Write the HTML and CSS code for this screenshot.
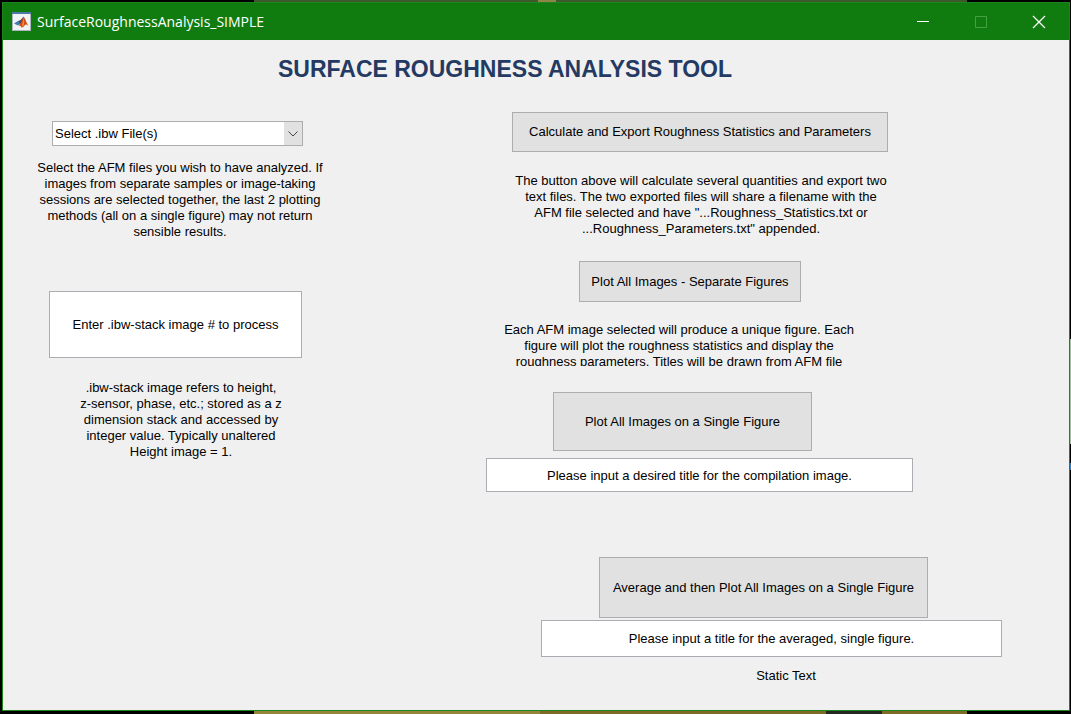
FILE: index.html
```html
<!DOCTYPE html>
<html lang="en">
<head>
<meta charset="utf-8">
<meta name="viewport" content="width=device-width, initial-scale=1">
<title>SurfaceRoughnessAnalysis_SIMPLE</title>
<link rel="stylesheet" href="styles.css">
</head>
<body>
<div class="window">
  <header class="titlebar">
    <svg class="app-icon" viewBox="0 0 19 19" aria-hidden="true">
      <rect width="19" height="19" fill="#a9b4bf"/>
      <rect x="1" y="1" width="17" height="17" fill="#f1f2f3"/>
      <rect width="19" height="2" fill="#4f78a8"/>
      <path d="M2 11.500 L6 9 L8.500 11.500 L6 13.500 Z" fill="#3f7eb5"/>
      <path d="M6 9 Q9 8.500 11.500 4.500 L11 9 L8.500 12.500 Z" fill="#45486e"/>
      <path d="M11.500 4.500 Q13 6 14 9.500 L16.500 14 Q14 11.500 12.500 13.500 Q11 16 9.500 15.500 Q8.500 13 6.500 13.500 Q9.500 11 11.500 4.500 Z" fill="#d44a17"/>
      <path d="M11.500 6 Q12.500 9 12 13 L10 15 Q10 12 11.500 6 Z" fill="#f08a2c"/>
    </svg>
    <span class="caption">SurfaceRoughnessAnalysis_SIMPLE</span>
    <div class="window-buttons">
      <button class="window-button" type="button" aria-label="Minimize">
        <svg viewBox="0 0 14 14" aria-hidden="true"><path d="M1 6.500H13"/></svg>
      </button>
      <button class="window-button" type="button" aria-label="Maximize" disabled>
        <svg viewBox="0 0 14 14" aria-hidden="true"><path d="M1.500 1.500H12.500V12.500H1.500Z"/></svg>
      </button>
      <button class="window-button" type="button" aria-label="Close">
        <svg viewBox="0 0 14 14" aria-hidden="true"><path d="M1 1L13 13M13 1L1 13" stroke-width="1.300"/></svg>
      </button>
    </div>
  </header>
  <main class="content">
    <h1 class="heading">SURFACE ROUGHNESS ANALYSIS TOOL</h1>
    <div class="columns">
      <section class="inputs">
        <div class="select-box">
          <select class="file-select" aria-label="Select .ibw File(s)" aria-describedby="file-note">
            <option>Select .ibw File(s)</option>
          </select>
          <svg class="select-arrow" viewBox="0 0 18 23" aria-hidden="true"><path d="M4.500 9.500L9 14L13.500 9.500"/></svg>
        </div>
        <p class="note file-note" id="file-note">Select the AFM files you wish to have analyzed. If images from separate samples or image-taking sessions are selected together, the last 2 plotting methods (all on a single figure) may not return sensible results.</p>
        <input class="entry stack-entry" type="text" value="Enter .ibw-stack image # to process" aria-label="Image number in the .ibw stack" aria-describedby="stack-note">
        <p class="note stack-note" id="stack-note">.ibw-stack image refers to height,<br>z-sensor, phase, etc.; stored as a z dimension stack and accessed by integer value. Typically unaltered Height image = 1.</p>
      </section>
      <section class="actions">
        <button class="action export-action" type="button">Calculate and Export Roughness Statistics and Parameters</button>
        <p class="note export-note">The button above will calculate several quantities and export two text files. The two exported files will share a filename with the AFM file selected and have "...Roughness_Statistics.txt or ...Roughness_Parameters.txt" appended.</p>
        <button class="action separate-action" type="button">Plot All Images - Separate Figures</button>
        <p class="note separate-note">Each AFM image selected will produce a unique figure. Each figure will plot the roughness statistics and display the roughness parameters. Titles will be drawn from AFM file</p>
        <button class="action single-action" type="button">Plot All Images on a Single Figure</button>
        <input class="entry single-entry" type="text" value="Please input a desired title for the compilation image." aria-label="Compilation image title">
        <div class="average">
          <button class="action average-action" type="button">Average and then Plot All Images on a Single Figure</button>
          <input class="entry average-entry" type="text" value="Please input a title for the averaged, single figure." aria-label="Averaged figure title">
          <p class="note status">Static Text</p>
        </div>
      </section>
    </div>
  </main>
</div>
</body>
</html>
```
FILE: styles.css
```css
* {
  box-sizing: border-box;
}

body {
  display: flex;
  min-height: 100vh;
  margin: 0;
  padding: 2px 1px 3px 2px;
  background:
    linear-gradient(90deg, transparent 254px, #3e5a2c 254px 538px, #8f8547 538px 556px, #3e5a2c 556px 967px, transparent 967px) top / 100% 2px no-repeat,
    linear-gradient(90deg, transparent 254px, #94853a 254px 540px, #7d6b27 540px 826px, #252820 826px 882px, #7d6b27 882px 967px, transparent 967px) bottom / 100% 3px no-repeat,
    linear-gradient(transparent 339px, #9fc49f 339px 444px, transparent 444px 463px, #2f7fc4 463px 470px, transparent 470px) right / 1px 100% no-repeat,
    #000;
  font-family: "Liberation Sans", Arial, sans-serif;
  font-size: 13px;
  line-height: 16px;
  color: #000;
}

.window {
  flex: 1;
  display: flex;
  flex-direction: column;
  border: 1px solid #1d851d;
  background: #f0f0f0;
}

.titlebar {
  display: flex;
  align-items: center;
  height: 37px;
  padding: 0 1px 0 9px;
  background: #107c10;
  color: #fff;
}

.app-icon {
  width: 19px;
  height: 19px;
}

.caption {
  flex: 1;
  margin-left: 6px;
  font-family: "Open Sans", "Noto Sans", sans-serif;
  font-size: 14px;
  line-height: 20px;
}

.window-buttons {
  display: flex;
}

.window-button {
  display: flex;
  align-items: center;
  justify-content: center;
  width: 58px;
  height: 37px;
  padding: 0;
  border: 0;
  background: none;
}

.window-button svg {
  width: 14px;
  height: 14px;
  fill: none;
  stroke: #fff;
}

.window-button:disabled svg {
  stroke: #43a043;
}

.heading {
  margin: 0;
  padding: 15px 62px 0 0;
  font-size: 23px;
  line-height: 28px;
  text-align: center;
  color: #243a62;
}

.columns {
  display: grid;
  grid-template-columns: 354fr 712fr;
}

.inputs,
.actions,
.average {
  display: flex;
  flex-direction: column;
  align-items: flex-start;
}

.inputs {
  padding: 38px 0 0 30px;
}

.actions {
  padding: 29px 0 0 129px;
}

.note {
  margin: 0;
  text-align: center;
}

.action,
.entry,
.file-select {
  border: 1px solid #adadad;
  border-radius: 0;
  font: inherit;
  color: inherit;
}

.action {
  padding: 0;
  background: #e1e1e1;
}

.entry {
  padding: 0 4px;
  border-color: #abadb3;
  background: #fff;
  text-align: center;
}

.select-box {
  display: grid;
  width: 251px;
  margin-left: 19px;
}

.file-select,
.select-arrow {
  grid-area: 1 / 1;
}

.file-select {
  appearance: none;
  height: 25px;
  padding: 0 20px 0 2px;
  background: #fff;
}

.select-arrow {
  justify-self: end;
  width: 18px;
  height: 23px;
  margin: 1px;
  background: #e1e1e1;
  fill: none;
  stroke: #444;
  pointer-events: none;
}

.file-note {
  width: 294px;
  margin-top: 14px;
}

.stack-entry {
  width: 253px;
  height: 67px;
  margin: 51px 0 0 16px;
}

.stack-note {
  width: 210px;
  margin: 22px 0 0 43px;
}

.export-action {
  width: 376px;
  height: 40px;
  margin-left: 26px;
}

.export-note {
  width: 376px;
  margin: 21px 0 0 27px;
}

.separate-action {
  width: 222px;
  height: 41px;
  margin: 24px 0 0 93px;
}

.separate-note {
  width: 360px;
  height: 44px;
  margin: 20px 0 0 13px;
  overflow: hidden;
}

.single-action {
  width: 259px;
  height: 59px;
  margin: 26px 0 0 67px;
}

.single-entry {
  width: 427px;
  height: 34px;
  margin-top: 7px;
}

.average {
  margin: 65px 0 0 55px;
}

.average-action {
  width: 329px;
  height: 61px;
  margin-left: 58px;
}

.average-entry {
  width: 461px;
  height: 37px;
  margin-top: 2px;
}

.status {
  width: 490px;
  margin: 11px 0 16px;
}
```
